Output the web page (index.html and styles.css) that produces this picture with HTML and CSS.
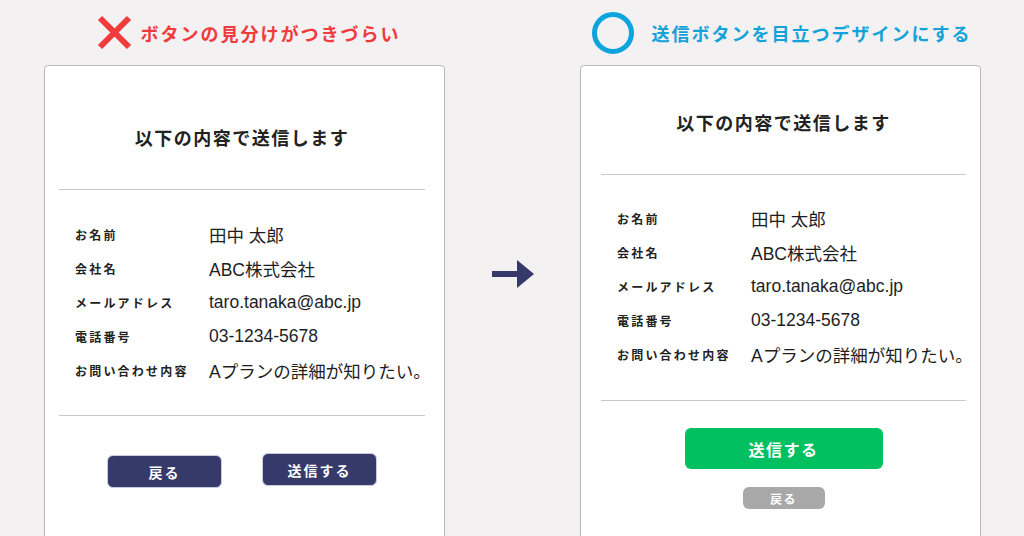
FILE: index.html
```html
<!DOCTYPE html>
<html lang="ja">
<head>
    <meta charset="utf-8">
    <title>送信ボタンの比較</title>
    <link rel="stylesheet" href="styles.css">
</head>
<body>
    <div class="compare">
        <section class="column">
            <h2 class="heading heading-bad">
                <svg class="mark" width="35" height="35" viewBox="0 0 35 35">
                    <path d="M3 3 L32 32 M32 3 L3 32" stroke="#f03a3c" stroke-width="6" fill="none"/>
                </svg>
                ボタンの見分けがつきづらい
            </h2>
            <div class="card card-bad">
                <h3 class="card-title">以下の内容で送信します</h3>
                <hr>
                <dl class="rows">
                    <dt>お名前</dt><dd>田中 太郎</dd>
                    <dt>会社名</dt><dd>ABC株式会社</dd>
                    <dt>メールアドレス</dt><dd>taro.tanaka@abc.jp</dd>
                    <dt>電話番号</dt><dd>03-1234-5678</dd>
                    <dt>お問い合わせ内容</dt><dd>Aプランの詳細が知りたい。</dd>
                </dl>
                <hr>
                <div class="actions-row">
                    <button class="btn-navy">戻る</button>
                    <button class="btn-navy">送信する</button>
                </div>
            </div>
        </section>

        <div class="arrow">
            <svg width="42" height="28" viewBox="0 0 42 28">
                <rect x="0" y="11" width="28" height="6" fill="#363a6b"/>
                <path d="M25 0 L42 14 L25 28 Z" fill="#363a6b"/>
            </svg>
        </div>

        <section class="column">
            <h2 class="heading heading-good">
                <svg class="mark" width="44" height="44" viewBox="0 0 44 44">
                    <circle cx="22" cy="22" r="18.5" stroke="#0aa5dc" stroke-width="5" fill="none"/>
                </svg>
                送信ボタンを目立つデザインにする
            </h2>
            <div class="card card-good">
                <h3 class="card-title">以下の内容で送信します</h3>
                <hr>
                <dl class="rows">
                    <dt>お名前</dt><dd>田中 太郎</dd>
                    <dt>会社名</dt><dd>ABC株式会社</dd>
                    <dt>メールアドレス</dt><dd>taro.tanaka@abc.jp</dd>
                    <dt>電話番号</dt><dd>03-1234-5678</dd>
                    <dt>お問い合わせ内容</dt><dd>Aプランの詳細が知りたい。</dd>
                </dl>
                <hr>
                <div class="actions-stack">
                    <button class="btn-send">送信する</button>
                    <button class="btn-back">戻る</button>
                </div>
            </div>
        </section>
    </div>
</body>
</html>
```

FILE: styles.css
```css
html, body {
    margin: 0;
    height: 100%;
    overflow: hidden;
}
body {
    background-color: #f3f1f2;
    font-family: "Liberation Sans", "Noto Sans CJK JP", sans-serif;
    color: #222;
}
.compare {
    display: flex;
    padding-left: 44px;
}
.column {
    width: 401px;
}
.heading {
    height: 65px;
    margin: 0;
    display: flex;
    align-items: center;
    justify-content: center;
    font-size: 18px;
    font-weight: bold;
    letter-spacing: 2px;
}
.heading-bad {
    color: #f03a3c;
    gap: 9px;
    padding-left: 8px;
}
.heading-good {
    color: #14a2d9;
    gap: 16px;
    padding-left: 2px;
}
.mark {
    flex-shrink: 0;
}
.arrow {
    width: 134px;
    display: flex;
    justify-content: center;
    padding-top: 260px;
    padding-left: 1px;
}
.card {
    background-color: #fff;
    border: 1px solid #b9b9b9;
    border-radius: 4px 4px 0 0;
    height: 520px;
    box-sizing: border-box;
}
.card-bad {
    padding: 60px 19px 0 14px;
}
.card-good {
    padding: 45px 14px 0 20px;
}
.card-title {
    margin: 0;
    text-align: center;
    font-size: 18px;
    line-height: 26px;
    letter-spacing: 1.5px;
    font-weight: bold;
    color: #222;
}
hr {
    border: none;
    border-top: 1px solid #c8c8c8;
    margin: 37px 0 0;
}
.rows {
    display: grid;
    grid-template-columns: 134px 1fr;
    grid-auto-rows: 34px;
    align-items: center;
    margin: 27px 0 28px;
    padding-left: 16px;
}
.card-good .rows {
    margin: 26px 0 29px;
}
.rows dt {
    font-size: 12px;
    font-weight: bold;
    letter-spacing: 2.2px;
    color: #222;
}
.rows dd {
    margin: 0;
    font-size: 17.5px;
    color: #1e1e1e;
    white-space: nowrap;
}
.card-bad hr + .rows + hr,
.card-good hr + .rows + hr {
    margin-top: 0;
}
.actions-row {
    display: flex;
    justify-content: center;
    gap: 40px;
    margin-top: 37px;
}
.btn-navy {
    width: 115px;
    height: 33px;
    border: 1px solid #c9cbe0;
    border-radius: 6px;
    background-color: #363a6b;
    color: #fff;
    font-family: inherit;
    font-size: 14px;
    font-weight: bold;
    letter-spacing: 2px;
}
.btn-navy:first-child {
    margin-top: 2px;
}
.actions-stack {
    display: flex;
    flex-direction: column;
    align-items: center;
    gap: 18px;
    margin-top: 27px;
}
.btn-send {
    width: 198px;
    height: 41px;
    border: none;
    border-radius: 6px;
    background-color: #00c060;
    color: #fff;
    font-family: inherit;
    font-size: 16px;
    font-weight: bold;
    letter-spacing: 1.5px;
}
.btn-back {
    width: 82px;
    height: 22px;
    border: none;
    border-radius: 6px;
    background-color: #a8a8a8;
    color: #fff;
    font-family: inherit;
    font-size: 12px;
    font-weight: bold;
    letter-spacing: 1.5px;
    padding: 0;
}
```
